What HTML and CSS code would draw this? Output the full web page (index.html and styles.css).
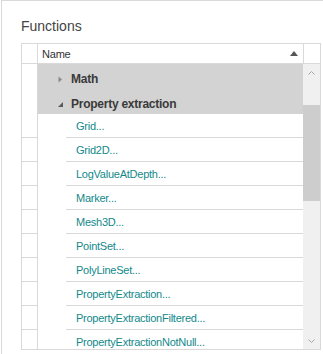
FILE: index.html
```html
<!DOCTYPE html>
<html lang="en">
  <head>
    <meta charset="UTF-8">
    <title>Functions</title>
    <link rel="stylesheet" href="styles.css">
  </head>
  <body>
    <div class="panel">
      <div class="title">Functions</div>

      <div class="grid">
        <div class="grid-head">
          <div class="rh"></div>
          <div class="col-name">
            <span>Name</span>
            <svg class="sort" width="8" height="5" viewBox="0 0 8 5"><polygon points="0,5 8,5 4,0" fill="#555"/></svg>
          </div>
          <div class="col-pad"></div>
        </div>

        <div class="grid-body">
          <div class="rows">
            <div class="row group">
              <div class="rh"></div>
              <div class="group-cell">
                <svg class="tri" width="5" height="7" viewBox="0 0 5 7"><polygon points="0.5,0.5 4,3.5 0.5,6.5" fill="#8a8a8a"/></svg>
                <span>Math</span>
              </div>
            </div>
            <div class="row group">
              <div class="rh"></div>
              <div class="group-cell">
                <svg class="tri" width="5" height="7" viewBox="0 0 5 7"><polygon points="5,1 5,6 0,6" fill="#5a5a5a"/></svg>
                <span>Property extraction</span>
              </div>
            </div>

            <div class="row item"><div class="rh"></div><div class="indent"></div><div class="item-cell">Grid...</div></div>
            <div class="row item"><div class="rh"></div><div class="indent"></div><div class="item-cell">Grid2D...</div></div>
            <div class="row item"><div class="rh"></div><div class="indent"></div><div class="item-cell">LogValueAtDepth...</div></div>
            <div class="row item"><div class="rh"></div><div class="indent"></div><div class="item-cell">Marker...</div></div>
            <div class="row item"><div class="rh"></div><div class="indent"></div><div class="item-cell">Mesh3D...</div></div>
            <div class="row item"><div class="rh"></div><div class="indent"></div><div class="item-cell">PointSet...</div></div>
            <div class="row item"><div class="rh"></div><div class="indent"></div><div class="item-cell">PolyLineSet...</div></div>
            <div class="row item"><div class="rh"></div><div class="indent"></div><div class="item-cell">PropertyExtraction...</div></div>
            <div class="row item"><div class="rh"></div><div class="indent"></div><div class="item-cell">PropertyExtractionFiltered...</div></div>
            <div class="row item"><div class="rh"></div><div class="indent"></div><div class="item-cell">PropertyExtractionNotNull...</div></div>
          </div>

          <div class="scrollbar">
            <div class="sb-btn">
              <svg width="7" height="4" viewBox="0 0 7 4"><polyline points="0.5,3.5 3.5,0.5 6.5,3.5" fill="none" stroke="#a6a6a6" stroke-width="1"/></svg>
            </div>
            <div class="sb-track">
              <div class="sb-thumb"></div>
            </div>
            <div class="sb-btn">
              <svg width="7" height="4" viewBox="0 0 7 4"><polyline points="0.5,0.5 3.5,3.5 6.5,0.5" fill="none" stroke="#a6a6a6" stroke-width="1"/></svg>
            </div>
          </div>
        </div>
      </div>
    </div>
  </body>
</html>
```

FILE: styles.css
```css
:root {
  --line: #d9d9d9;
  --group-bg: #d3d3d3;
  --scroll-bg: #f0f0f0;
  --thumb: #cdcdcd;
  --link: #12898a;
  --text: #333333;
}

* {
  margin: 0;
  padding: 0;
  box-sizing: border-box;
}

body {
  font-family: 'Liberation Sans', Arial, sans-serif;
  background: #ffffff;
  color: var(--text);
  overflow: hidden;
}

.panel {
  margin-left: 1px;
  height: 354px;
  border-top: 1px solid var(--line);
  border-left: 1px solid var(--line);
}

.title {
  padding: 17px 0 0 19px;
  margin-bottom: 9px;
  font-size: 14px;
  line-height: 16px;
  color: #444444;
}

.grid {
  margin-left: 19px;
  width: 300px;
  height: 307px;
  border: 1px solid var(--line);
  display: flex;
  flex-direction: column;
  overflow: hidden;
}

/* header */
.grid-head {
  display: flex;
  height: 20px;
  flex-shrink: 0;
  border-bottom: 1px solid var(--line);
}

.rh {
  width: 16px;
  flex-shrink: 0;
  border-right: 1px solid var(--line);
}

.col-name {
  width: 266px;
  border-right: 1px solid var(--line);
  display: flex;
  align-items: center;
  justify-content: space-between;
  padding: 0 5px 0 4px;
  font-size: 11px;
  letter-spacing: -0.2px;
  color: #333333;
}

.sort {
  margin-top: -1px;
}

.col-pad {
  width: 16px;
}

/* body */
.grid-body {
  flex: 1;
  display: flex;
  overflow: hidden;
}

.rows {
  width: 281px;
  display: flex;
  flex-direction: column;
}

.row {
  display: flex;
  flex-shrink: 0;
}

.group {
  height: 25px;
}

.group-cell {
  flex: 1;
  background: var(--group-bg);
  display: flex;
  align-items: center;
  gap: 8px;
  padding: 5px 0 0 20px;
  font-size: 12px;
  font-weight: bold;
  letter-spacing: -0.25px;
  color: #3a3a3a;
}

.item {
  height: 24px;
}

.item .rh {
  border-bottom: 1px solid var(--line);
}

.indent {
  width: 28px;
  flex-shrink: 0;
}

.item-cell {
  flex: 1;
  border-bottom: 1px solid var(--line);
  display: flex;
  align-items: center;
  padding-left: 10px;
  font-size: 11px;
  letter-spacing: -0.25px;
  color: var(--link);
}

/* scrollbar */
.scrollbar {
  width: 17px;
  background: var(--scroll-bg);
  display: flex;
  flex-direction: column;
}

.sb-btn {
  height: 17px;
  display: flex;
  align-items: center;
  justify-content: center;
}

.sb-track {
  flex: 1;
  padding-top: 24px;
}

.sb-thumb {
  height: 96px;
  background: var(--thumb);
}
```
